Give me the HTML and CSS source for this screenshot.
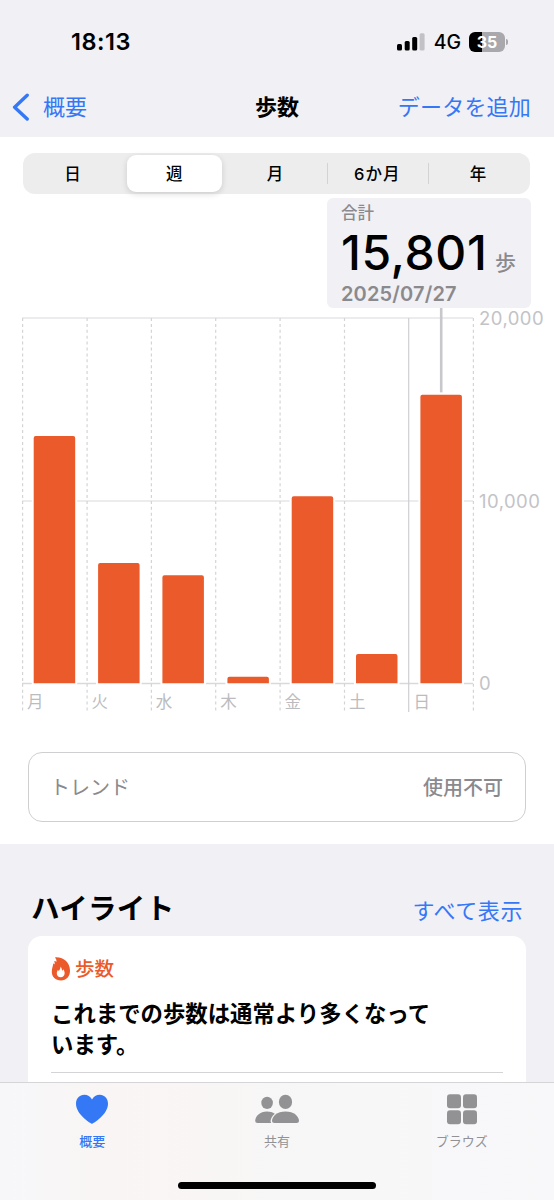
FILE: index.html
```
<!DOCTYPE html>
<html lang="ja">
   <head>
      <meta charset="utf-8">
      <meta name="viewport" content="width=device-width, initial-scale=1">
      <title>歩数</title>
      <link rel="stylesheet" href="styles.css">
   </head>
   <body>
      <header class="header">
         <div class="status">
            <span class="time">18:13</span>
            <div class="indicators">
               <svg class="signal" width="28" height="18" viewBox="0 0 28 18">
                  <rect x="0" y="11" width="5" height="6.5" rx="1.5" />
                  <rect x="7.7" y="8" width="5" height="9.5" rx="1.5" />
                  <rect x="15.2" y="4" width="5" height="13.5" rx="1.5" />
                  <rect class="off" x="22.6" y="0.2" width="5" height="17.3" rx="1.5" />
               </svg>
               <span class="network">4G</span>
               <div class="battery">35</div>
               <div class="battery-tip"></div>
            </div>
         </div>
         <nav class="navbar">
            <a class="back">
               <svg width="18" height="28" viewBox="0 0 18 28">
                  <path d="M15.2,2.2 L2.6,14.2 L15.2,26" />
               </svg>
               <span>概要</span>
            </a>
            <h1 class="title">歩数</h1>
            <a class="add">データを追加</a>
         </nav>
      </header>

      <main>
         <section class="panel">
            <div class="segments">
               <span class="segment">日</span>
               <span class="segment selected">週</span>
               <span class="segment">月</span>
               <span class="segment divided">6か月</span>
               <span class="segment divided">年</span>
            </div>

            <div class="chart">
               <svg width="554" height="558" viewBox="0 194 554 558">

                  <!-- Horizontal grid -->
                  <g class="grid">
                     <path d="M22,318 H473" />
                     <path d="M22,501 H473" />
                     <path class="base" d="M22,683.5 H473" />
                  </g>

                  <!-- Days -->
                  <g class="days">
                     <path d="M22.6,318 V712" />
                     <path d="M87.1,318 V712" />
                     <path d="M151.4,318 V712" />
                     <path d="M215.7,318 V712" />
                     <path d="M280.1,318 V712" />
                     <path d="M344.5,318 V712" />
                     <path class="week" d="M408.7,318 V712" />
                     <path d="M473.4,318 V712" />
                  </g>

                  <path class="pointer" d="M441.2,308 V392.5" />

                  <!-- Bars -->
                  <g class="bars">
                     <path d="M32.7,684.2 V438 q0,-3 3,-3 h37.5 q3,0 3,3 V684.2 z" />
                     <path d="M97.1,684.2 V565 q0,-3 3,-3 h37.5 q3,0 3,3 V684.2 z" />
                     <path d="M161.4,684.2 V577.2 q0,-3 3,-3 h37.5 q3,0 3,3 V684.2 z" />
                     <path d="M226.4,684.2 V678.7 q0,-3 3,-3 h37.5 q3,0 3,3 V684.2 z" />
                     <path d="M290.7,684.2 V498.2 q0,-3 3,-3 h37.5 q3,0 3,3 V684.2 z" />
                     <path d="M355,684.2 V656 q0,-3 3,-3 h37.5 q3,0 3,3 V684.2 z" />
                     <path d="M419.4,684.2 V396.8 q0,-3 3,-3 h37.5 q3,0 3,3 V684.2 z" />
                  </g>

                  <g class="values">
                     <text x="479" y="324.6">20,000</text>
                     <text x="479" y="508">10,000</text>
                     <text x="479" y="690">0</text>
                  </g>
                  <g class="names">
                     <text x="27" y="708">月</text>
                     <text x="91.4" y="708">火</text>
                     <text x="155.8" y="708">水</text>
                     <text x="220.2" y="708">木</text>
                     <text x="284.6" y="708">金</text>
                     <text x="349" y="708">土</text>
                     <text x="413.4" y="708">日</text>
                  </g>
               </svg>

               <div class="callout">
                  <div class="label">合計</div>
                  <div class="total"><span class="number">15,801</span><span class="unit">歩</span></div>
                  <div class="date">2025/07/27</div>
               </div>
            </div>

            <div class="trend">
               <span>トレンド</span>
               <b>使用不可</b>
            </div>
         </section>

         <section class="highlights">
            <div class="heading">
               <h2>ハイライト</h2>
               <a>すべて表示</a>
            </div>
            <article class="card">
               <div class="kind">
                  <svg width="20" height="24" viewBox="0 0 20 24">
                     <path class="flame" d="M4,0.4 C12.6,-0.2 19,5.4 19,13.6 C19,19.8 15.4,23.4 9.9,23.4 C4.5,23.4 0.8,19.8 0.8,15 C0.8,11.6 1.9,9.5 2.3,6.6 C2.9,6.7 3.3,7 3.7,7.4 C3.8,6 3.6,4.8 3.2,3.9 C4.2,3.9 4.9,4.2 5.5,4.7 C5.6,3.2 5.1,1.6 4,0.4 z" />
                     <path class="core" d="M9.6,9.6 C10.8,11.2 10.9,12.8 11.1,13.8 C11.7,13.5 12,13 12.1,12.3 C13.3,13.7 13.8,15.2 13.6,16.8 C13.3,19 11.9,20.2 9.8,20.2 C7.4,20.2 5.8,18.7 5.8,16.5 C5.8,15 6.5,13.9 6.8,13 C7.3,13.2 7.6,13.6 7.8,14 C8.8,12.9 9.5,11.5 9.6,9.6 z" />
                  </svg>
                  <span>歩数</span>
               </div>
               <p>これまでの歩数は通常より多くなって<br>います。</p>
            </article>
         </section>
      </main>

      <footer class="tabbar">
         <div class="tabs">
            <a class="tab active">
               <svg width="34" height="32" viewBox="0 0 34 32">
                  <path d="M17,30.8 C15.9,30.8 1,21.5 1,10.8 C1,5.3 4.7,1.8 9.2,1.8 C12.7,1.8 15.4,3.7 17,6.6 C18.6,3.7 21.3,1.8 24.8,1.8 C29.3,1.8 33,5.3 33,10.8 C33,21.5 18.1,30.8 17,30.8 z" />
               </svg>
               <span>概要</span>
            </a>
            <a class="tab">
               <svg width="46" height="32" viewBox="0 0 46 32">
                  <ellipse cx="13.1" cy="9.9" rx="5.8" ry="6.2" />
                  <ellipse cx="31.5" cy="8.9" rx="6.6" ry="7.2" />
                  <path d="M3.5,30 Q1.2,30 1.2,28 C1.2,23 6,18.4 13,18.4 C16,18.4 18.8,19.2 20.8,20.7 C18,23 16.6,26 16.6,28 Q16.6,29 17.2,30 z" />
                  <path d="M20.4,30 Q18,30 18,27.9 C18,23.5 23,18.4 31.5,18.4 C40,18.4 45,23.5 45,27.9 Q45,30 42.6,30 z" />
               </svg>
               <span>共有</span>
            </a>
            <a class="tab">
               <svg width="32" height="32" viewBox="0 0 32 32">
                  <rect x="1" y="1.2" width="14" height="14" rx="3" />
                  <rect x="17" y="1.2" width="14" height="14" rx="3" />
                  <rect x="1" y="17.2" width="14" height="14" rx="3" />
                  <rect x="17" y="17.2" width="14" height="14" rx="3" />
               </svg>
               <span>ブラウズ</span>
            </a>
         </div>
         <div class="home"></div>
      </footer>
   </body>
</html>
```
FILE: styles.css
```
* {
   box-sizing : border-box;
}

body {
   margin : 0px;
   height : 1200px;
   display : flex;
   flex-direction : column;
   overflow : hidden;
   background-color : #f1f0f5;
   color : #000;
   font-family : Inter, "Noto Sans CJK JP", sans-serif;
   font-size : 22px;
}

h1, h2, p {
   margin : 0px;
}

svg {
   display : block;
   flex : none;
}

/* Header */

.header {
   height : 137px;
   flex : none;
}

.status {
   height : 80px;
   padding : 3px 46px 0px 71px;
   display : flex;
   align-items : center;
   justify-content : space-between;
}

.time {
   font-size : 23.5px;
   font-weight : 600;
   line-height : 28px;
   letter-spacing : 0.5px;
}

.indicators {
   display : flex;
   align-items : center;
}

.signal .off {
   fill : #c2c1c6;
}

.network {
   margin : 0px 8px 0px 9px;
   font-size : 19.5px;
   line-height : 24px;
   font-weight : 500;
}

.battery {
   width : 36px;
   height : 20px;
   border-radius : 6px;
   background : linear-gradient(to right, #000 35%, #a9a8ad 35%);
   color : #fff;
   font-size : 16px;
   font-weight : 700;
   line-height : 20px;
   text-align : center;
}

.battery-tip {
   width : 2px;
   height : 6px;
   margin-left : 1px;
   border-radius : 0px 2px 2px 0px;
   background-color : #a9a8ad;
}

.navbar {
   height : 54px;
   padding : 0px 23px 0px 12px;
   display : grid;
   grid-template-columns : 1fr auto 1fr;
   align-items : center;
   line-height : 30px;
   color : #3478f6;
}

.back {
   display : flex;
   align-items : center;
   gap : 13px;
}

.back path {
   fill : none;
   stroke : #3478f6;
   stroke-width : 3.4px;
   stroke-linecap : round;
   stroke-linejoin : round;
}

.title {
   margin-left : 11px;
   color : #000;
   font-size : 22px;
   font-weight : 700;
}

.add {
   text-align : right;
   letter-spacing : 0.2px;
}

/* Chart */

.panel {
   height : 707px;
   padding-top : 16px;
   background-color : #fff;
}

.segments {
   height : 41px;
   margin : 0px 24px 0px 23px;
   padding : 2px 1px 2px 0px;
   display : grid;
   grid-template-columns : repeat(5, 1fr);
   border-radius : 12px;
   background-color : #ededee;
   font-size : 16.5px;
   font-weight : 500;
}

.segment {
   display : flex;
   align-items : center;
   justify-content : center;
   padding-right : 2px;
   line-height : 24px;
}

.segment.selected {
   margin : 0px 3px;
   padding-right : 1px;
   border-radius : 9px;
   background-color : #fff;
   box-shadow : 0px 2px 6px rgba(0, 0, 0, 0.14);
}

.segment.divided {
   padding-right : 0px;
   background : linear-gradient(#d3d3d6, #d3d3d6) left center / 1px 21px no-repeat;
   letter-spacing : 1px;
}

.chart {
   position : relative;
}

.grid path {
   stroke : #e6e6e8;
   stroke-width : 1.3px;
}

.grid .base {
   stroke : #d9d9dc;
}

.days path {
   stroke : #d4d4d7;
   stroke-width : 1.2px;
   stroke-dasharray : 3 2.9;
}

.days .week {
   stroke : #cfcfd3;
   stroke-dasharray : none;
}

.pointer {
   stroke : #c7c7cc;
   stroke-width : 2.6px;
}

.bars path {
   fill : #eb5a2a;
   stroke : #fff;
   stroke-width : 2px;
}

.values text {
   fill : #c3c3c7;
   font-size : 18.5px;
   letter-spacing : 0.45px;
}

.names text {
   fill : #bcbcc0;
   font-size : 16.5px;
}

.callout {
   position : absolute;
   left : 327px;
   top : 4px;
   width : 204px;
   height : 110px;
   padding : 4px 14px;
   border-radius : 6px;
   background-color : #f1f0f5;
   color : #8a8a8e;
   font-weight : 500;
}

.label {
   padding-top : 1px;
   font-size : 16.5px;
   line-height : 20px;
}

.total {
   display : flex;
   align-items : baseline;
   gap : 8px;
   height : 59px;
   line-height : 60px;
}

.number {
   width : 146px;
   color : #000;
   font-size : 48px;
   font-weight : 500;
   letter-spacing : 0.6px;
}

.unit {
   font-size : 21px;
}

.date {
   font-size : 20px;
   font-weight : 600;
   line-height : 24px;
   letter-spacing : 0.15px;
}

.trend {
   height : 70px;
   margin : 0px 28px;
   padding : 1px 22px 0px 21px;
   display : flex;
   align-items : center;
   justify-content : space-between;
   border : 1.5px solid #cfcfd2;
   border-radius : 14px;
   color : #8a8a8e;
   font-size : 20px;
   line-height : 28px;
}

.trend b {
   font-weight : 500;
}

/* Highlights */

.heading {
   height : 92px;
   padding : 43px 31px 0px 31px;
   display : flex;
   align-items : baseline;
   justify-content : space-between;
   line-height : 44px;
}

.heading h2 {
   font-size : 28.5px;
   font-weight : 700;
   letter-spacing : 0.3px;
}

.heading a {
   color : #3478f6;
   letter-spacing : 0.6px;
}

.card {
   height : 200px;
   margin : 0px 28px;
   padding : 19px 23px;
   border-radius : 14px;
   background-color : #fff;
}

.kind {
   display : flex;
   align-items : center;
   gap : 4px;
   height : 28px;
   color : #eb5a2a;
   font-size : 19.5px;
   font-weight : 500;
   line-height : 28px;
}

.flame {
   fill : #eb5a2a;
}

.core {
   fill : #fff;
}

.card p {
   height : 90px;
   padding-top : 15px;
   border-bottom : 1px solid #d4d4d7;
   font-size : 22.4px;
   font-weight : 700;
   line-height : 31px;
   white-space : nowrap;
}

/* Tab bar */

.tabbar {
   position : absolute;
   left : 0px;
   top : 1082px;
   width : 554px;
   height : 118px;
   padding-top : 10px;
   border-top : 1px solid #d5d5d8;
   background : linear-gradient(to right, #f7f7fa, #f9f5f4 18%, #f8f6f5 40%, #f7f7f8 60%, #f8f8fa);
}

.tabs {
   display : grid;
   grid-template-columns : repeat(3, 1fr);
   height : 89px;
}

.tab {
   display : flex;
   flex-direction : column;
   align-items : center;
   gap : 6px;
   color : #929295;
   font-size : 13px;
   font-weight : 400;
   line-height : 20px;
}

.tab svg {
   fill : currentColor;
}

.tab.active {
   color : #3478f6;
   font-weight : 500;
}

.home {
   width : 198px;
   height : 7px;
   margin : 0px auto;
   border-radius : 4px;
   background-color : #000;
}
```
